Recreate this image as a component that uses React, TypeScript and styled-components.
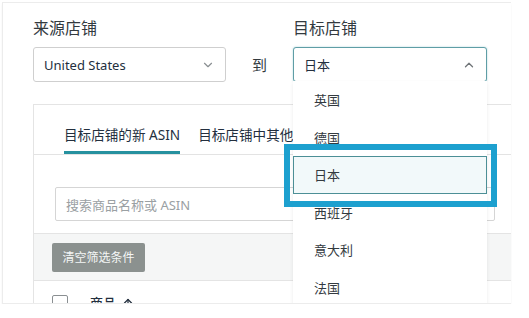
import React from "react";
import styled, { createGlobalStyle } from "styled-components";
import { ChevronDown, ChevronUp, ArrowUp } from "lucide-react";

const GlobalStyle = createGlobalStyle`
  html, body {
    margin: 0;
    padding: 0;
    background: #ffffff;
  }
  body {
    font-family: "Noto Sans", "Noto Sans CJK SC", sans-serif;
    color: #232f3e;
  }
`;

const Card = styled.div`
  position: relative;
  margin: 2px 0 0 2px;
  width: 508px;
  height: 300px;
  border: 1px solid #ececec;
  border-right: none;
  box-shadow: 0 2px 2px rgba(0, 0, 0, 0.05);
  overflow: hidden;
  background: #fff;
`;

const Header = styled.div`
  display: flex;
  align-items: flex-end;
  padding: 14px 0 0 30px;
`;

const Field = styled.div<{ $width: number }>`
  display: flex;
  flex-direction: column;
  width: ${(p) => p.$width}px;
`;

const Label = styled.div`
  font-size: 16px;
  line-height: 22px;
  height: 30px;
  color: #333a3f;
`;

const Select = styled.div<{ $open?: boolean }>`
  box-sizing: border-box;
  height: 35px;
  display: flex;
  align-items: center;
  justify-content: space-between;
  padding: 0 10px 0 10px;
  border: 1px solid ${(p) => (p.$open ? "#5f9ea6" : "#cfcfcf")};
  border-radius: 3px;
  box-shadow: ${(p) => (p.$open ? "0 0 2px rgba(0,130,150,0.35)" : "none")};
  font-size: 13px;
  font-weight: 400;
  color: #232f3e;
  background: #fff;
`;

const To = styled.div`
  width: 67px;
  height: 35px;
  display: flex;
  align-items: center;
  justify-content: center;
  font-size: 15px;
  color: #333a3f;
`;

const Panel = styled.div`
  margin: 22px 0 0 30px;
  border: 1px solid #e4e4e4;
  border-right: none;
`;

const TabBar = styled.div`
  display: flex;
  gap: 18px;
  height: 50px;
  padding-left: 30px;
  border-bottom: 1px solid #e3e3e3;
  box-sizing: border-box;
`;

const Tab = styled.div<{ $active?: boolean }>`
  padding: 20px 0 6px;
  line-height: 20px;
  font-size: 13.6px;
  font-weight: 400;
  color: #232f3e;
  border-bottom: 3px solid ${(p) => (p.$active ? "#26919f" : "transparent")};
  white-space: nowrap;
`;

const SearchArea = styled.div`
  padding: 32px 22px 12px 21px;
`;

const SearchInput = styled.div`
  box-sizing: border-box;
  height: 34px;
  width: 440px;
  border: 1px solid #d5d5d5;
  border-radius: 2px;
  display: flex;
  align-items: center;
  padding-left: 10px;
  font-size: 13px;
  color: #9aa0a3;
`;

const FilterRow = styled.div`
  height: 48px;
  box-sizing: border-box;
  background: #f5f6f6;
  border-top: 1px solid #e4e4e4;
  border-bottom: 1px solid #e4e4e4;
  display: flex;
  align-items: center;
  padding-left: 18px;
`;

const ClearButton = styled.div`
  height: 29px;
  width: 93px;
  display: flex;
  align-items: center;
  justify-content: center;
  background: #8b918f;
  border-radius: 2px;
  color: #f4f6f6;
  font-size: 12px;
`;

const HeadRow = styled.div`
  display: flex;
  align-items: center;
  gap: 22px;
  padding: 12px 0 0 18px;
  font-size: 13px;
  font-weight: 500;
`;

const Checkbox = styled.div`
  width: 14px;
  height: 14px;
  border: 1px solid #8a8f92;
  border-radius: 2px;
`;

const ColTitle = styled.div`
  display: flex;
  align-items: center;
  gap: 6px;
  color: #232f3e;
`;

const Dropdown = styled.div`
  position: absolute;
  left: 290px;
  top: 78px;
  width: 194px;
  box-sizing: border-box;
  background: #fff;
  border: 1px solid #dedede;
  border-top: none;
  box-shadow: 0 2px 4px rgba(0, 0, 0, 0.08);
`;

const Option = styled.div<{ $selected?: boolean }>`
  box-sizing: border-box;
  height: 37.5px;
  display: flex;
  align-items: center;
  padding-left: 20px;
  font-size: 13px;
  color: #333a3f;
  background: ${(p) => (p.$selected ? "#f2f9fa" : "#fff")};
  border: 1px solid ${(p) => (p.$selected ? "#4c8f96" : "transparent")};
  margin: 0 -1px;
`;

const Highlight = styled.div`
  position: absolute;
  left: 281px;
  top: 141px;
  width: 213px;
  height: 63px;
  box-sizing: border-box;
  border: 6px solid #1da0cf;
  pointer-events: none;
`;

const options = ["英国", "德国", "日本", "西班牙", "意大利", "法国"];

export default function App() {
  return (
    <>
      <GlobalStyle />
      <Card>
        <Header>
          <Field $width={193}>
            <Label>来源店铺</Label>
            <Select>
              United States
              <ChevronDown size={14} color="#8a8f92" strokeWidth={2} />
            </Select>
          </Field>
          <To>到</To>
          <Field $width={194}>
            <Label>目标店铺</Label>
            <Select $open>
              日本
              <ChevronUp size={14} color="#6f7478" strokeWidth={2.2} />
            </Select>
          </Field>
        </Header>
        <Panel>
          <TabBar>
            <Tab $active>目标店铺的新 ASIN</Tab>
            <Tab>目标店铺中其他 ASIN</Tab>
          </TabBar>
          <SearchArea>
            <SearchInput>搜索商品名称或 ASIN</SearchInput>
          </SearchArea>
          <FilterRow>
            <ClearButton>清空筛选条件</ClearButton>
          </FilterRow>
          <HeadRow>
            <Checkbox />
            <ColTitle>
              商品
              <ArrowUp size={12} strokeWidth={2.5} />
            </ColTitle>
          </HeadRow>
        </Panel>
        <Dropdown>
          {options.map((o) => (
            <Option key={o} $selected={o === "日本"}>
              {o}
            </Option>
          ))}
        </Dropdown>
        <Highlight />
      </Card>
    </>
  );
}
